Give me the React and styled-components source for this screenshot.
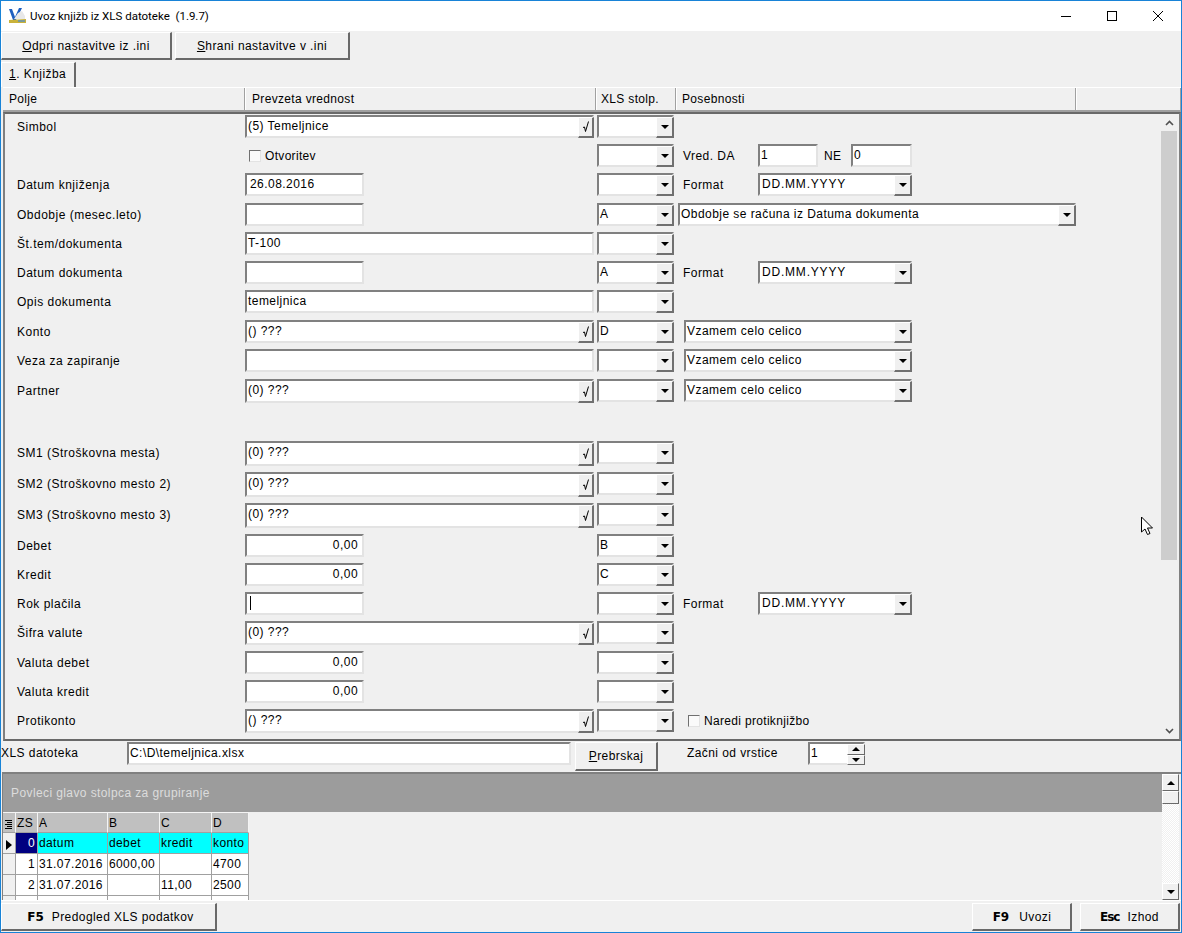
import React from "react";
import styled, { createGlobalStyle } from "styled-components";

const Global = createGlobalStyle`
  html, body { margin: 0; padding: 0; background: #f0f0f0; }
  * { box-sizing: border-box; }
  body { font-family: "Liberation Sans", Arial, sans-serif; font-size: 12px; color: #000; }
`;

const Frame = styled.div`
  position: relative;
  width: 1182px;
  height: 933px;
  border: 1px solid #1883d7;
  background: #f0f0f0;
  display: flex;
  flex-direction: column;
  overflow: hidden;
`;
const TitleBar = styled.div`
  height: 30px;
  background: #fff;
  display: flex;
  align-items: center;
  padding-left: 8px;
  flex: none;
`;
const TitleText = styled.div`
  margin-left: 4px;
  font-family: "Roboto", "Liberation Sans", sans-serif;
  font-size: 11.5px;
  flex: 1;
`;
const WinButton = styled.div`
  width: 46px;
  height: 30px;
  display: flex;
  align-items: center;
  justify-content: center;
`;
const Toolbar = styled.div`
  height: 31px;
  display: flex;
  gap: 3px;
  padding-top: 1px;
  flex: none;
`;
const Raised = styled.div`
  width: ${(p) => p.$w}px;
  height: ${(p) => p.$h || 28}px;
  background: #f0f0f0;
  border-top: 1px solid #fff;
  border-left: 1px solid #fff;
  border-right: 2px solid #696969;
  border-bottom: 2px solid #696969;
  padding-left: ${(p) => p.$pl || 0}px;
  display: flex;
  align-items: center;
  justify-content: center;
  font-size: 12px;
  letter-spacing: 0.42px;
  flex: none;
`;
const TabStrip = styled.div`
  height: 25px;
  flex: none;
`;
const Tab = styled.div`
  width: 75px;
  height: 25px;
  border-top: 1px solid #fff;
  border-left: 1px solid #fff;
  border-right: 2px solid #696969;
  padding: 4px 0 0 7px;
  font-size: 12px;
  letter-spacing: 0.45px;
`;
const HeaderBar = styled.div`
  height: 25px;
  margin-left: 2px;
  display: flex;
  flex: none;
  border-top: 1px solid #fff;
  border-bottom: 2px solid #a0a0a0;
`;
const HeaderCell = styled.div`
  width: ${(p) => p.$w}px;
  flex: ${(p) => (p.$w ? "none" : 1)};
  border-right: 1px solid #a0a0a0;
  box-shadow: 1px 0 0 #fff;
  padding: 4px 0 0 ${(p) => p.$pl || 6}px;
  letter-spacing: 0.33px;
`;
const FormPanel = styled.div`
  height: 629px;
  margin-left: 2px;
  flex: none;
  display: flex;
  border-top: 2px solid #696969;
  border-left: 2px solid #808080;
  border-bottom: 2px solid #696969;
  border-right: 2px solid #808080;
  background: #f0f0f0;
`;
const FormRows = styled.div`
  flex: 1;
  padding-top: 1px;
`;
const Row = styled.div`
  height: ${(p) => p.$h}px;
  display: flex;
  align-items: flex-start;
`;
const Label = styled.div`
  width: 240px;
  flex: none;
  padding: 5px 0 0 12px;
  letter-spacing: 0.5px;
  white-space: nowrap;
`;
const ValueCell = styled.div`
  width: 351px;
  flex: none;
`;
const XlsCell = styled.div`
  width: 87px;
  padding-left: 1px;
  flex: none;
`;
const Special = styled.div`
  display: flex;
  align-items: center;
  height: 23px;
`;
const Field = styled.div`
  position: relative;
  width: ${(p) => p.$w}px;
  height: ${(p) => p.$h || 23}px;
  background: #fff;
  border-top: 2px solid #808080;
  border-left: 2px solid #808080;
  border-right: 2px solid #e3e3e3;
  border-bottom: 2px solid #e3e3e3;
  padding: 2px ${(p) => (p.$right ? 4 : 0)}px 0 ${(p) => p.$pl ?? 1}px;
  text-align: ${(p) => (p.$right ? "right" : "left")};
  letter-spacing: ${(p) => p.$ls ?? 0.45}px;
  white-space: nowrap;
  flex: none;
`;
const LookupBtn = styled.div`
  position: absolute;
  right: -2px;
  top: 0;
  bottom: -2px;
  width: 16px;
  background: #efefef;
  border-top: 1px solid #fff;
  border-left: 1px solid #fff;
  border-right: 2px solid #707070;
  border-bottom: 2px solid #707070;
  display: flex;
  align-items: center;
  justify-content: center;
`;
const ArrowBtn = styled.div`
  position: absolute;
  right: -2px;
  top: 0;
  bottom: -2px;
  width: 18px;
  background: #f0f0f0;
  border-top: 1px solid #fff;
  border-left: 1px solid #fff;
  border-right: 2px solid #707070;
  border-bottom: 2px solid #707070;
  display: flex;
  align-items: center;
  justify-content: center;
`;
const Tri = styled.div`
  width: 0;
  height: 0;
  border-left: 4px solid transparent;
  border-right: 4px solid transparent;
  ${(p) => (p.$up ? "border-bottom: 4px solid #000;" : "border-top: 4px solid #000;")}
`;
const Caret = styled.span`
  display: inline-block;
  width: 1px;
  height: 14px;
  background: #000;
  margin-left: 2px;
`;
const CheckWrap = styled.div`
  display: flex;
  align-items: center;
  height: 23px;
  padding-left: ${(p) => p.$pl}px;
  letter-spacing: 0.32px;
`;
const Box = styled.span`
  display: inline-block;
  width: 12px;
  height: 12px;
  background: #fafafa;
  border-top: 1px solid #707070;
  border-left: 1px solid #707070;
  border-right: 1px solid #e3e3e3;
  border-bottom: 1px solid #e3e3e3;
  margin-right: 4px;
`;
const SpecialText = styled.span`
  margin-left: ${(p) => p.$ml || 0}px;
  width: ${(p) => p.$w}px;
  letter-spacing: 0.45px;
`;
const SpacedField = styled.div`
  margin-left: ${(p) => p.$ml || 0}px;
`;
const Scroll = styled.div`
  width: 16px;
  flex: none;
  margin-right: 2px;
  display: flex;
  flex-direction: column;
  background: #f0f0f0;
`;
const ScrollEnd = styled.div`
  height: 17px;
  flex: none;
  display: flex;
  align-items: center;
  justify-content: center;
`;
const Thumb = styled.div`
  height: 429px;
  flex: none;
  background: #cdcdcd;
`;
const Track = styled.div`
  flex: 1;
`;
const FileRow = styled.div`
  height: 31px;
  flex: none;
  display: flex;
  align-items: flex-start;
  padding-top: 1px;
`;
const FileLabel = styled.div`
  width: 126px;
  padding-top: 4px;
  letter-spacing: 0.45px;
`;
const StartLabel = styled.div`
  margin-left: 29px;
  width: 121px;
  padding-top: 4px;
  letter-spacing: 0.42px;
`;
const Spin = styled.div`
  position: absolute;
  right: -2px;
  top: 0;
  bottom: -2px;
  width: 18px;
  display: flex;
  flex-direction: column;
`;
const SpinPart = styled.div`
  flex: 1;
  background: #f0f0f0;
  border-top: 1px solid #fff;
  border-left: 1px solid #fff;
  border-right: 1px solid #696969;
  border-bottom: 1px solid #696969;
  display: flex;
  align-items: center;
  justify-content: center;
`;
const GridArea = styled.div`
  height: 128px;
  margin-left: 1px;
  flex: none;
  display: flex;
  border-top: 2px solid #808080;
  border-left: 1px solid #808080;
  overflow: hidden;
`;
const GridMain = styled.div`
  flex: 1;
  overflow: hidden;
`;
const GroupBar = styled.div`
  height: 38px;
  background: #9c9c9c;
  color: #dcdcdc;
  padding: 12px 0 0 8px;
  letter-spacing: 0.4px;
`;
const Table = styled.div`
  display: grid;
  grid-template-columns: 13px 22px 70px 52px 52px 37px;
  grid-auto-rows: 21px;
  width: 246px;
`;
const Cell = styled.div`
  background: ${(p) => p.$bg || "#fff"};
  color: ${(p) => p.$fg || "#000"};
  border-right: 1px solid #a0a0a0;
  border-bottom: 1px solid #a0a0a0;
  padding: 3px 2px 0 1px;
  text-align: ${(p) => (p.$right ? "right" : "left")};
  letter-spacing: 0.38px;
  white-space: nowrap;
  display: ${(p) => (p.$center ? "flex" : "block")};
  align-items: center;
  justify-content: center;
`;
const HeadCell = styled(Cell)`
  background: #c0c0c0;
  border-top: 1px solid #f4f4f4;
  border-right: 1px solid #f4f4f4;
  border-bottom: 1px solid #a0a0a0;
`;
const GridScroll = styled.div`
  width: 17px;
  flex: none;
  margin-right: 2px;
  display: flex;
  flex-direction: column;
  background-image: repeating-conic-gradient(#f0f0f0 0 25%, #fff 0 50%);
  background-size: 2px 2px;
`;
const GridArrow = styled.div`
  height: 17px;
  flex: none;
  background: #f0f0f0;
  border-top: 1px solid #fff;
  border-left: 1px solid #fff;
  border-right: 1px solid #696969;
  border-bottom: 1px solid #696969;
  display: flex;
  align-items: center;
  justify-content: center;
`;
const GridThumb = styled.div`
  height: 13px;
  flex: none;
  background: #f0f0f0;
  border-top: 1px solid #fff;
  border-left: 1px solid #fff;
  border-right: 1px solid #696969;
  border-bottom: 1px solid #696969;
`;
const Footer = styled.div`
  height: 32px;
  flex: none;
  display: flex;
  border-top: 1px solid #fff;
  padding: 2px 1px 0 0;
`;
const FooterSpacer = styled.div`
  flex: 1;
`;
const FooterGap = styled.div`
  width: ${(p) => p.$w}px;
  flex: none;
`;
const Key = styled.b`
  font-family: "DejaVu Sans", sans-serif;
  font-size: 12px;
  font-weight: 700;
  margin-right: ${(p) => p.$mr}px;
  letter-spacing: ${(p) => p.$ls || 0}px;
`;
const Cursor = styled.svg`
  position: absolute;
  left: 1139px;
  top: 515px;
`;

const Lookup = ({ text, h }) => (
  <Field $w={349} $h={h}>
    {text}
    <LookupBtn>
      <svg width="8" height="12" viewBox="0 0 8 12">
        <path d="M1 6.5 L2.5 6 L3.5 10.5 L6.5 0.5" fill="none" stroke="#000" strokeWidth="1" />
      </svg>
    </LookupBtn>
  </Field>
);

const Combo = ({ w, text, pl, ls }) => (
  <Field $w={w} $pl={pl} $ls={ls}>
    {text}
    <ArrowBtn>
      <Tri />
    </ArrowBtn>
  </Field>
);

const Fmt = () => (
  <Special>
    <SpecialText $w={75}>Format</SpecialText>
    <Combo w={154} text="DD.MM.YYYY" pl={2} ls={0.8} />
  </Special>
);
const Vzamem = () => (
  <Special>
    <SpacedField $ml={1}>
      <Combo w={228} text="Vzamem celo celico" />
    </SpacedField>
  </Special>
);

const short = (t, right, pl) => (
  <Field $w={119} $right={right} $pl={pl}>
    {t}
  </Field>
);
const wide = (t) => <Field $w={349}>{t}</Field>;

const rows = [
  { h: 29, label: "Simbol", v: <Lookup text="(5) Temeljnice" /> },
  {
    h: 29,
    v: (
      <CheckWrap $pl={4}>
        <Box />
        Otvoritev
      </CheckWrap>
    ),
    s: (
      <Special>
        <SpecialText $w={75}>Vred. DA</SpecialText>
        <Field $w={60}>1</Field>
        <SpecialText $w={27} $ml={6}>NE</SpecialText>
        <Field $w={61}>0</Field>
      </Special>
    ),
  },
  { h: 30, label: "Datum knjiženja", v: short("26.08.2016", false, 3), s: <Fmt /> },
  {
    h: 29,
    label: "Obdobje (mesec.leto)",
    v: short(""),
    x: "A",
    s: (
      <SpacedField $ml={-5}>
        <Combo w={398} text="Obdobje se računa iz Datuma dokumenta" />
      </SpacedField>
    ),
  },
  { h: 29, label: "Št.tem/dokumenta", v: wide("T-100") },
  { h: 29, label: "Datum dokumenta", v: short(""), x: "A", s: <Fmt /> },
  { h: 30, label: "Opis dokumenta", v: wide("temeljnica") },
  { h: 29, label: "Konto", v: <Lookup text="() ???" />, x: "D", s: <Vzamem /> },
  { h: 30, label: "Veza za zapiranje", v: wide(""), s: <Vzamem /> },
  { h: 62, label: "Partner", v: <Lookup text="(0) ???" h={24} />, s: <Vzamem /> },
  { h: 31, label: "SM1 (Stroškovna mesta)", v: <Lookup text="(0) ???" h={25} /> },
  { h: 31, label: "SM2 (Stroškovno mesto 2)", v: <Lookup text="(0) ???" h={25} /> },
  { h: 31, label: "SM3 (Stroškovno mesto 3)", v: <Lookup text="(0) ???" h={25} /> },
  { h: 29, label: "Debet", v: short("0,00", true), x: "B" },
  { h: 29, label: "Kredit", v: short("0,00", true), x: "C" },
  {
    h: 29,
    label: "Rok plačila",
    v: (
      <Field $w={119}>
        <Caret />
      </Field>
    ),
    s: <Fmt />,
  },
  { h: 30, label: "Šifra valute", v: <Lookup text="(0) ???" h={24} /> },
  { h: 29, label: "Valuta debet", v: short("0,00", true) },
  { h: 29, label: "Valuta kredit", v: short("0,00", true) },
  {
    h: 28,
    label: "Protikonto",
    v: <Lookup text="() ???" h={24} />,
    s: (
      <CheckWrap $pl={5}>
        <Box />
        Naredi protiknjižbo
      </CheckWrap>
    ),
  },
];

const tableRows = [
  ["1", "31.07.2016", "6000,00", "", "4700"],
  ["2", "31.07.2016", "", "11,00", "2500"],
  ["", "", "", "", ""],
];

export default function App() {
  return (
    <Frame>
      <Global />
      <TitleBar>
        <svg width="17" height="16" viewBox="0 0 17 16">
          <path d="M0 1 L3 1 L6 9 L10 0 L13 0 L7 12 L4 12 Z" fill="#1e5fc0" />
          <path d="M9 5 L13 3 L16 8 L16 11 L5 11 Z" fill="#e8e8e8" />
          <path d="M0 12 L17 11 L17 15 L0 15 Z" fill="#c9b23a" />
          <path d="M9 12 L16 12 L16 14 L9 14 Z" fill="#7a9a9a" />
        </svg>
        <TitleText>Uvoz knjižb iz XLS datoteke&nbsp; (1.9.7)</TitleText>
        <WinButton>
          <svg width="10" height="10" viewBox="0 0 10 10">
            <path d="M0 5.5 H10" stroke="#000" strokeWidth="1" />
          </svg>
        </WinButton>
        <WinButton>
          <svg width="10" height="10" viewBox="0 0 10 10">
            <rect x="0.5" y="0.5" width="9" height="9" fill="none" stroke="#000" strokeWidth="1" />
          </svg>
        </WinButton>
        <WinButton>
          <svg width="10" height="10" viewBox="0 0 10 10">
            <path d="M0 0 L10 10 M10 0 L0 10" stroke="#000" strokeWidth="1" />
          </svg>
        </WinButton>
      </TitleBar>
      <Toolbar>
        <Raised $w={171}>
          <span><u>O</u>dpri nastavitve iz .ini</span>
        </Raised>
        <Raised $w={175}>
          <span><u>S</u>hrani nastavitve v .ini</span>
        </Raised>
      </Toolbar>
      <TabStrip>
        <Tab><u>1</u>. Knjižba</Tab>
      </TabStrip>
      <HeaderBar>
        <HeaderCell $w={242}>Polje</HeaderCell>
        <HeaderCell $w={351} $pl={7}>Prevzeta vrednost</HeaderCell>
        <HeaderCell $w={80} $pl={5}>XLS stolp.</HeaderCell>
        <HeaderCell $w={400}>Posebnosti</HeaderCell>
        <HeaderCell />
      </HeaderBar>
      <FormPanel>
        <FormRows>
          {rows.map((r, i) => (
            <Row key={i} $h={r.h}>
              <Label>{r.label}</Label>
              <ValueCell>{r.v}</ValueCell>
              <XlsCell>
                <Combo w={77} text={r.x || ""} />
              </XlsCell>
              {r.s}
            </Row>
          ))}
        </FormRows>
        <Scroll>
          <ScrollEnd>
            <svg width="9" height="6" viewBox="0 0 9 6">
              <path d="M1 5 L4.5 1.5 L8 5" fill="none" stroke="#505050" strokeWidth="1.6" />
            </svg>
          </ScrollEnd>
          <Thumb />
          <Track />
          <ScrollEnd>
            <svg width="9" height="6" viewBox="0 0 9 6">
              <path d="M1 1 L4.5 4.5 L8 1" fill="none" stroke="#505050" strokeWidth="1.6" />
            </svg>
          </ScrollEnd>
        </Scroll>
      </FormPanel>
      <FileRow>
        <FileLabel>XLS datoteka</FileLabel>
        <Field $w={444}>C:\D\temeljnica.xlsx</Field>
        <FooterGap $w={4} />
        <Raised $w={83} $h={29}>
          <span><u>P</u>rebrskaj</span>
        </Raised>
        <StartLabel>Začni od vrstice</StartLabel>
        <Field $w={57}>
          1
          <Spin>
            <SpinPart><Tri $up /></SpinPart>
            <SpinPart><Tri /></SpinPart>
          </Spin>
        </Field>
      </FileRow>
      <GridArea>
        <GridMain>
          <GroupBar>Povleci glavo stolpca za grupiranje</GroupBar>
          <Table>
            <HeadCell $center>
              <svg width="7" height="9" viewBox="0 0 7 9">
                <path d="M0 .5H7M2 2.5H7M0 4.5H7M2 6.5H7M0 8.5H7" stroke="#000" strokeWidth="1" />
              </svg>
            </HeadCell>
            <HeadCell>ZS</HeadCell>
            <HeadCell>A</HeadCell>
            <HeadCell>B</HeadCell>
            <HeadCell>C</HeadCell>
            <HeadCell>D</HeadCell>
            <Cell $bg="#f0f0f0" $center>
              <svg width="6" height="10" viewBox="0 0 6 10">
                <path d="M0 0 L6 5 L0 10 Z" fill="#000" />
              </svg>
            </Cell>
            <Cell $bg="#000080" $fg="#fff" $right>0</Cell>
            <Cell $bg="#00ffff">datum</Cell>
            <Cell $bg="#00ffff">debet</Cell>
            <Cell $bg="#00ffff">kredit</Cell>
            <Cell $bg="#00ffff">konto</Cell>
            {tableRows.map((r, i) => (
              <React.Fragment key={i}>
                <Cell $bg="#f0f0f0" />
                <Cell $right>{r[0]}</Cell>
                <Cell>{r[1]}</Cell>
                <Cell>{r[2]}</Cell>
                <Cell>{r[3]}</Cell>
                <Cell>{r[4]}</Cell>
              </React.Fragment>
            ))}
          </Table>
        </GridMain>
        <GridScroll>
          <GridArrow><Tri $up /></GridArrow>
          <GridThumb />
          <Track />
          <GridArrow><Tri /></GridArrow>
        </GridScroll>
      </GridArea>
      <Footer>
        <Raised $w={216} $h={28} $pl={4}>
          <Key $mr={8}>F5</Key>Predogled XLS podatkov
        </Raised>
        <FooterSpacer />
        <Raised $w={100} $h={28} $pl={1}>
          <Key $mr={10}>F9</Key>Uvozi
        </Raised>
        <FooterGap $w={8} />
        <Raised $w={100} $h={28}>
          <Key $mr={8} $ls={-1}>Esc</Key>Izhod
        </Raised>
      </Footer>
      <Cursor width="14" height="20" viewBox="0 0 14 20">
        <path d="M1.5 1 L1.5 16 L5 13 L7.5 18.5 L10 17.5 L7.5 12 L12.5 12 Z" fill="#fff" stroke="#000" strokeWidth="1" />
      </Cursor>
    </Frame>
  );
}
